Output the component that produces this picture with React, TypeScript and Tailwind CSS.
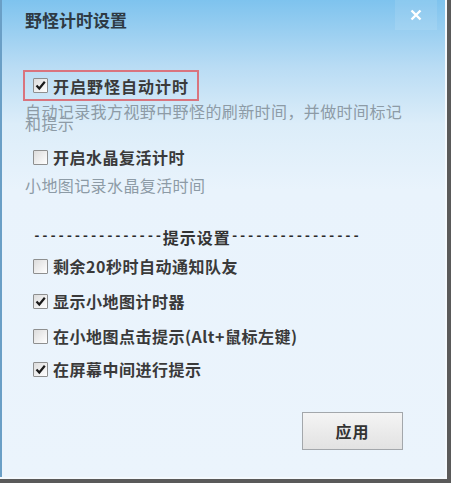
import React from "react";

const FONT = { fontFamily: '"Noto Sans CJK SC", "Noto Sans", sans-serif' };

function Box({ checked }: { checked: boolean }) {
  return (
    <span className="w-[15px] h-[15px] shrink-0 border border-[#8e8f8f] bg-gradient-to-br from-[#dcdcdc] to-[#ffffff] flex items-center justify-center rounded-[1px]">
      {checked && (
        <svg width="11" height="11" viewBox="0 0 11 11">
          <path d="M1.5 5.5 L4.3 8.5 L9.8 1.8" fill="none" stroke="#1a1a1a" strokeWidth="2.2" />
        </svg>
      )}
    </span>
  );
}

function Row({ checked, label, className = "" }: { checked: boolean; label: string; className?: string }) {
  return (
    <div className={"flex items-center gap-[5px] pl-[33px] " + className}>
      <Box checked={checked} />
      <span className="text-[16px] leading-[20px] font-bold text-[#3a3a3a] tracking-[0.5px]">{label}</span>
    </div>
  );
}

export default function App() {
  return (
    <div className="w-[451px] h-[483px] bg-[#5a5a5a] overflow-hidden" style={FONT}>
      <div className="w-[447px] h-[479px] border-r-2 border-b-2 border-[#f4f9fd] bg-[linear-gradient(180deg,#7ec3ee_0%,#b9dcf4_14%,#dcedf9_26%,#e9f3fc_40%,#ebf4fc_100%)] flex flex-col relative">
        <div className="absolute left-0 top-0 bottom-0 w-[2px] bg-[#6a9fc6]" />
        <div className="absolute right-[8px] top-0 w-[42px] h-[30px] bg-[#ffffff1a] flex items-center justify-center">
          <svg width="12" height="12" viewBox="0 0 12 12">
            <path d="M1.5 1.5 L10.5 10.5 M10.5 1.5 L1.5 10.5" stroke="#ffffff" strokeWidth="2.4" />
          </svg>
        </div>
        <div className="h-[42px] pl-[25px] pt-[8px] text-[17px] leading-[24px] font-bold text-[#2e3a44]">野怪计时设置</div>

        <div className="mt-[28px] ml-[23px] w-[176px] h-[31px] border-2 border-[#d9747e] flex items-center">
          <div className="flex items-center gap-[5px] pl-[8px]">
            <Box checked={true} />
            <span className="text-[16px] leading-[20px] font-bold text-[#3a3a3a] tracking-[1px]">开启野怪自动计时</span>
          </div>
        </div>
        <div className="pl-[25px] w-[412px] text-[16px] leading-[12px] text-[#8d9ba6] mt-[4px] tracking-[0.4px]">
          自动记录我方视野中野怪的刷新时间，并做时间标记和提示
        </div>

        <Row checked={false} label="开启水晶复活计时" className="mt-[18px]" />
        <div className="pl-[25px] text-[16px] leading-[20px] text-[#8d9ba6] mt-[8px] tracking-[0.4px]">小地图记录水晶复活时间</div>

        <div className="flex items-center pl-[33px] mt-[32px]">
          <span className="text-[13px] font-bold text-[#2a2a2a] tracking-[0.3px]" style={{ fontFamily: '"Liberation Mono", monospace' }}>----------------</span>
          <span className="text-[16px] leading-[20px] font-bold text-[#333] tracking-[1px]">提示设置</span>
          <span className="text-[13px] font-bold text-[#2a2a2a] tracking-[0.3px]" style={{ fontFamily: '"Liberation Mono", monospace' }}>----------------</span>
        </div>

        <Row checked={false} label="剩余20秒时自动通知队友" className="mt-[9px]" />
        <Row checked={true} label="显示小地图计时器" className="mt-[15px]" />
        <Row checked={false} label="在小地图点击提示(Alt+鼠标左键)" className="mt-[15px]" />
        <Row checked={true} label="在屏幕中间进行提示" className="mt-[13px]" />

        <div className="flex justify-end pr-[42px] mt-[33px]">
          <button className="w-[101px] h-[38px] border border-[#a3a7ab] bg-gradient-to-b from-[#f4f4f4] to-[#e2e2e2] text-[16px] font-bold text-[#333] tracking-[1px]">
            应用
          </button>
        </div>
      </div>
    </div>
  );
}
